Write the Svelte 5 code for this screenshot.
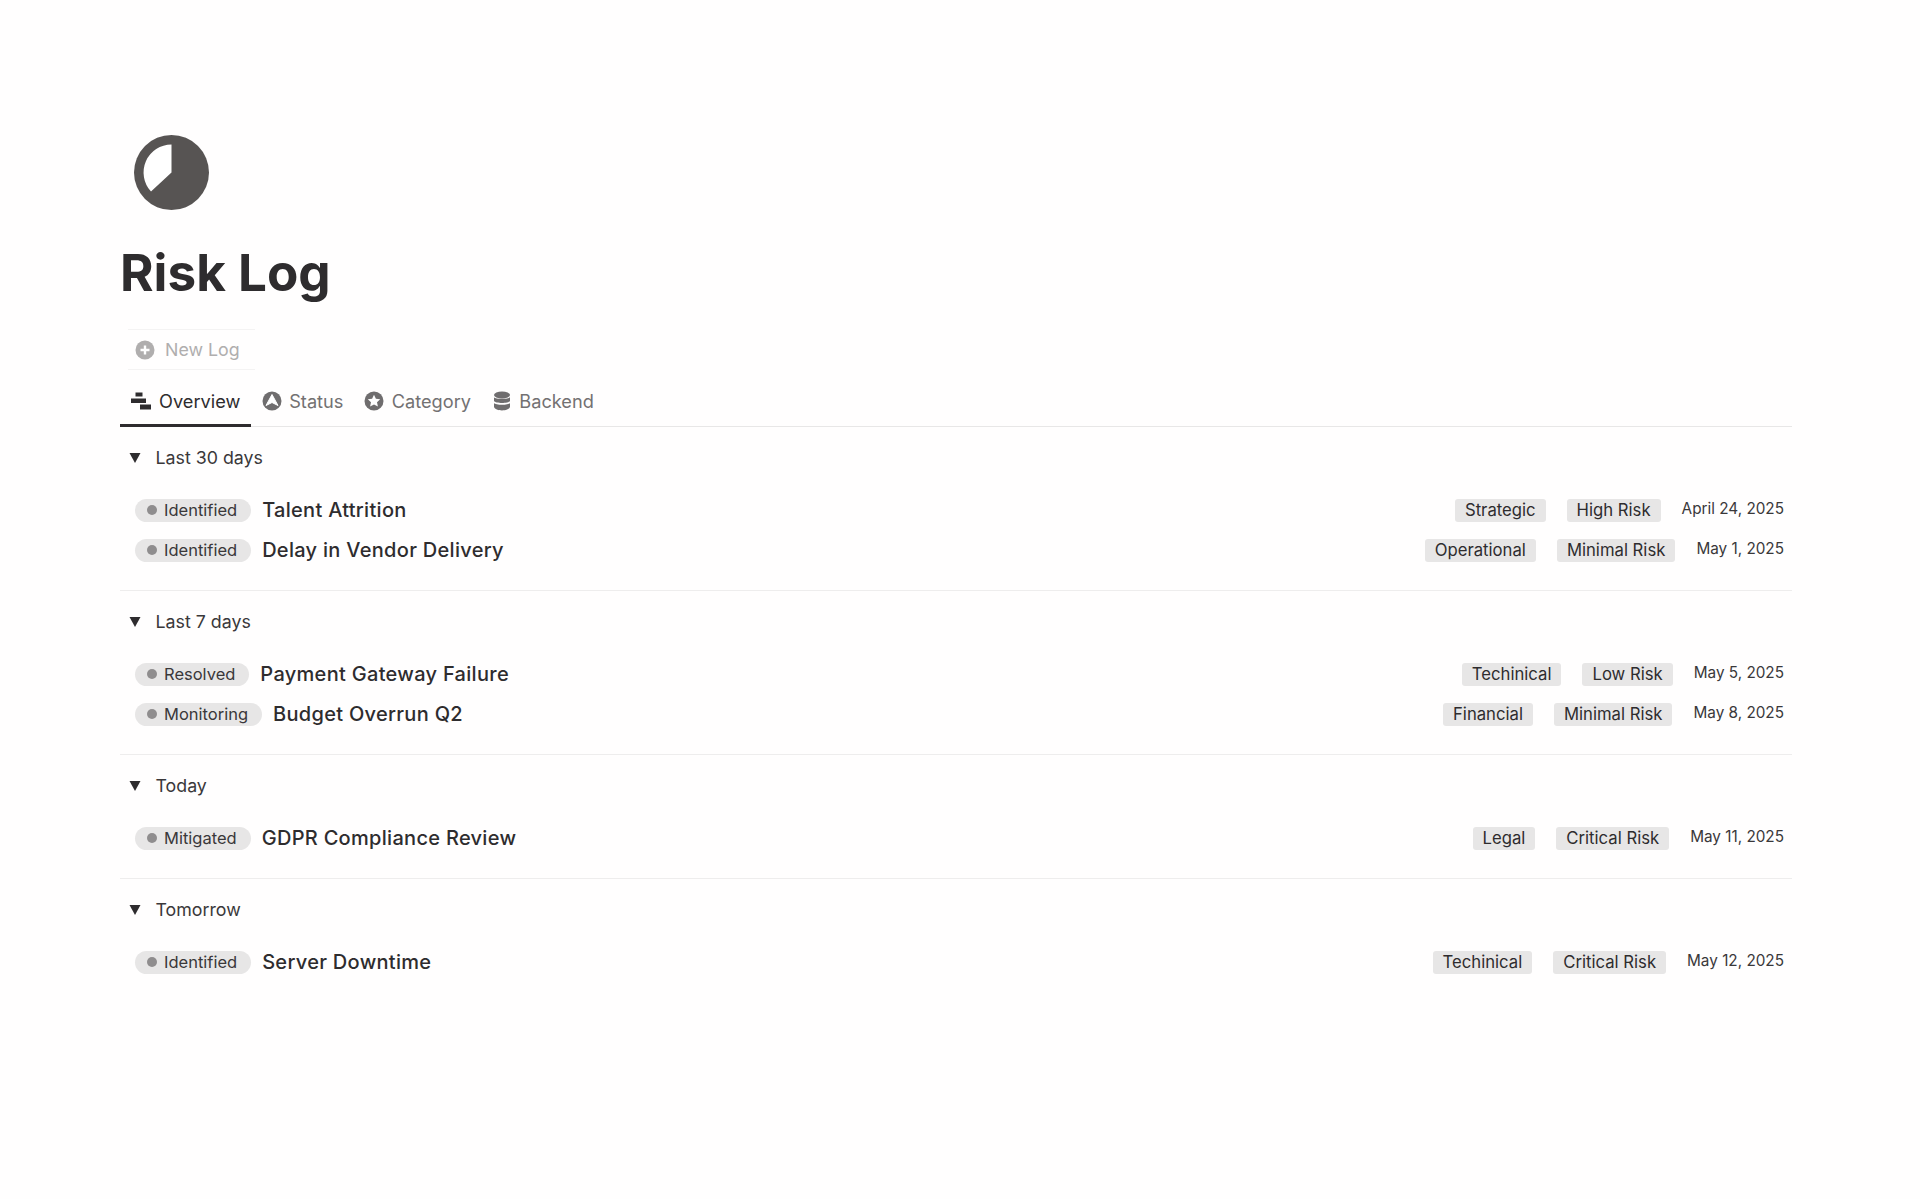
<script lang="ts">
  type Row = { status: string; title: string; category: string; risk: string; date: string };
  const groups: { name: string; rows: Row[] }[] = [
    {
      name: "Last 30 days",
      rows: [
        { status: "Identified", title: "Talent Attrition", category: "Strategic", risk: "High Risk", date: "April 24, 2025" },
        { status: "Identified", title: "Delay in Vendor Delivery", category: "Operational", risk: "Minimal Risk", date: "May 1, 2025" },
      ],
    },
    {
      name: "Last 7 days",
      rows: [
        { status: "Resolved", title: "Payment Gateway Failure", category: "Techinical", risk: "Low Risk", date: "May 5, 2025" },
        { status: "Monitoring", title: "Budget Overrun Q2", category: "Financial", risk: "Minimal Risk", date: "May 8, 2025" },
      ],
    },
    {
      name: "Today",
      rows: [
        { status: "Mitigated", title: "GDPR Compliance Review", category: "Legal", risk: "Critical Risk", date: "May 11, 2025" },
      ],
    },
    {
      name: "Tomorrow",
      rows: [
        { status: "Identified", title: "Server Downtime", category: "Techinical", risk: "Critical Risk", date: "May 12, 2025" },
      ],
    },
  ];
</script>

<main class="page">
  <svg class="page-icon" viewBox="0 0 75 75" aria-hidden="true">
    <circle cx="37.5" cy="37.5" r="37.5" fill="#575453" />
    <path d="M37.5 9.5A28 28 0 0 0 17 56.5L37.5 37.5Z" fill="#fff" />
  </svg>
  <h1>Risk Log</h1>

  <button class="new-log">
    <svg viewBox="0 0 20 20" aria-hidden="true">
      <circle cx="10" cy="10" r="9.5" fill="#b0aeae" />
      <path d="M10 5.5v9M5.500 10h9" stroke="#fff" stroke-width="2.4" />
    </svg>
    New Log
  </button>

  <nav class="tabs">
    <div class="tab active">
      <svg viewBox="0 0 20 18" aria-hidden="true">
        <path d="M4.500 0.500h7v4h-7zM0 6.500h15V11H0zM9 12.500h11v5H9z" fill="#2e2c2e" />
      </svg>
      Overview
    </div>
    <div class="tab">
      <svg viewBox="0 0 20 20" aria-hidden="true">
        <circle cx="10" cy="10" r="9.500" fill="#6f6d6e" />
        <path d="M10 3.500 16 14.500 10 11.500 4 14.500Z" fill="#fff" stroke="#fff" stroke-linejoin="round" />
      </svg>
      Status
    </div>
    <div class="tab">
      <svg viewBox="0 0 20 20" aria-hidden="true">
        <circle cx="10" cy="10" r="9.500" fill="#6f6d6e" />
        <path d="M10 3.800 11.900 7.800 16.200 8.300 13 11.300 13.900 15.600 10 13.400 6.100 15.600 7 11.300 3.800 8.300 8.100 7.800Z" fill="#fff" />
      </svg>
      Category
    </div>
    <div class="tab">
      <svg viewBox="0 0 20 20" aria-hidden="true">
        <ellipse cx="10" cy="4" rx="8" ry="3.500" fill="#6f6d6e" />
        <path d="M2 6.200C3.500 8.400 16.500 8.400 18 6.200V10C16.500 12.600 3.500 12.600 2 10Z" fill="#6f6d6e" />
        <path d="M2 12C3.500 14.400 16.500 14.400 18 12V16C16.500 20.500 3.500 20.500 2 16Z" fill="#6f6d6e" />
      </svg>
      Backend
    </div>
  </nav>

  {#each groups as group}
    <section class="group">
      <header class="group-head">
        <svg viewBox="0 0 12 10" aria-hidden="true"><path d="M0.500 0H11.500L6 10Z" fill="#2e2c2e" /></svg>
        {group.name}
      </header>
      {#each group.rows as row}
        <div class="row">
          <span class="status"><i></i>{row.status}</span>
          <span class="title">{row.title}</span>
          <span class="tag">{row.category}</span>
          <span class="tag">{row.risk}</span>
          <time>{row.date}</time>
        </div>
      {/each}
    </section>
  {/each}
</main>

<style>
  :global(body) {
    margin: 0;
    background: #fffefe;
  }
  .page {
    box-sizing: border-box;
    width: 1920px;
    height: 1199px;
    padding: 135px 128px 0 120px;
    font-family: Inter, "Liberation Sans", sans-serif;
    color: #2e2c2e;
  }
  .page-icon {
    display: block;
    width: 75px;
    height: 75px;
    margin-left: 14px;
  }
  h1 {
    margin: 33px 0 0;
    font-size: 51.200px;
    line-height: 58px;
    font-weight: 700;
    color: #2e2c2e;
  }
  .new-log {
    display: flex;
    align-items: center;
    gap: 10px;
    box-sizing: border-box;
    width: 127px;
    height: 41px;
    margin: 28px 0 0 8px;
    padding: 0 0 0 7px;
    border: 0;
    border-top: 1px solid #f4f3f3;
    border-bottom: 1px solid #f4f3f3;
    background: none;
    font: inherit;
    font-size: 17.800px;
    color: #b0aeae;
  }
  .new-log svg {
    width: 20px;
    height: 20px;
  }
  .tabs {
    display: flex;
    height: 57px;
    box-sizing: border-box;
    border-bottom: 1.500px solid #e8e7e7;
  }
  .tab {
    display: flex;
    align-items: center;
    gap: 7.500px;
    box-sizing: border-box;
    height: 57px;
    padding: 7px 10.400px 0;
    border-bottom: 3px solid transparent;
    font-size: 18.200px;
    color: #737172;
  }
  .tab svg {
    width: 20px;
    height: 20px;
  }
  .tab.active {
    gap: 8px;
    padding: 7px 11px 0;
    color: #2e2c2e;
    border-bottom-color: #2e2c2e;
  }
  .group {
    padding-bottom: 20px;
    border-bottom: 1.500px solid #eeeded;
  }
  .group:last-child {
    border-bottom: 0;
  }
  .group-head {
    display: flex;
    align-items: center;
    gap: 14.500px;
    box-sizing: border-box;
    height: 63px;
    padding: 0 0 2px 9px;
    font-size: 17.800px;
    color: #3a383a;
  }
  .group-head svg {
    width: 12px;
    height: 10px;
  }
  .row {
    display: flex;
    align-items: center;
    height: 40px;
    padding: 0 8px 0 15px;
  }
  .status {
    display: flex;
    align-items: center;
    gap: 7px;
    height: 23px;
    padding: 0 14px 0 12px;
    border-radius: 12px;
    background: #e7e6e6;
    font-size: 16.500px;
    color: #3a383a;
  }
  .status i {
    width: 10px;
    height: 10px;
    border-radius: 50%;
    background: #8f8d8e;
  }
  .title {
    flex: 1;
    margin-left: 11px;
    font-size: 20px;
    font-weight: 450;
    letter-spacing: 0.3px;
    color: #2e2c2e;
  }
  .tag {
    height: 23px;
    padding: 0 10px;
    margin-right: 21px;
    border-radius: 3px;
    background: #e7e6e6;
    font-size: 16.700px;
    line-height: 23px;
    color: #2e2c2e;
  }
  time {
    margin-top: -3px;
    font-size: 15.300px;
    color: #3a383a;
  }
</style>
